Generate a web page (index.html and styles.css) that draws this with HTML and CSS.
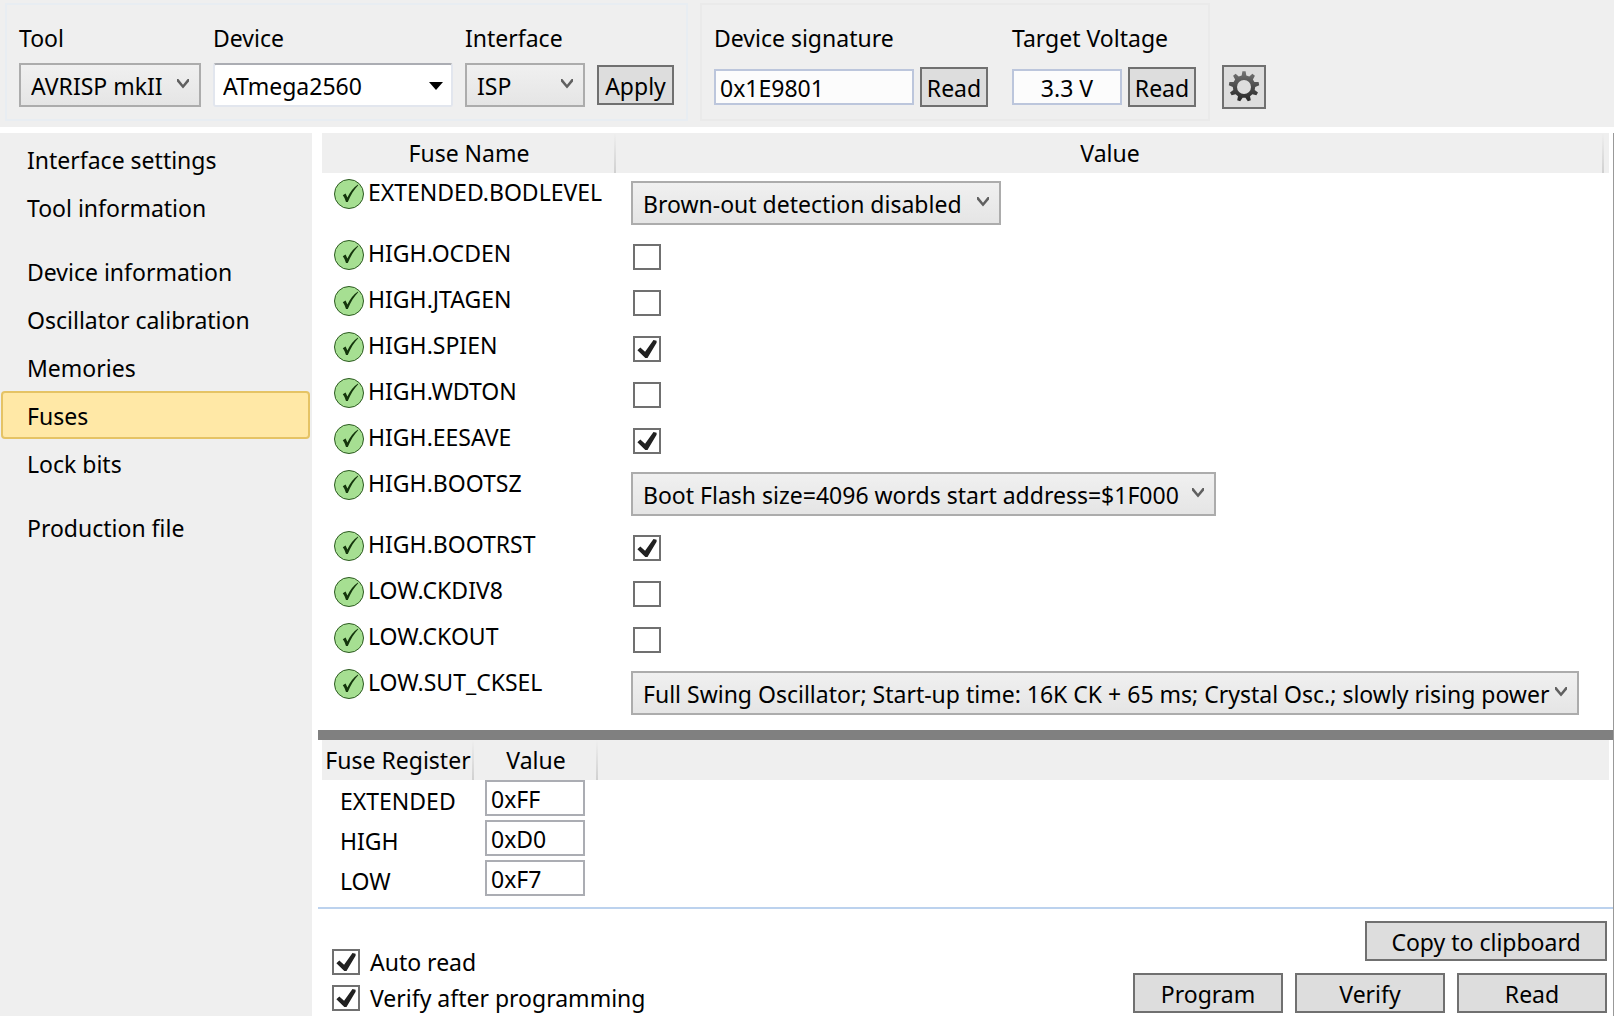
FILE: index.html
```html
<!DOCTYPE html>
<html lang="en">
<head>
<meta charset="utf-8">
<title>Device Programming</title>
<link rel="stylesheet" href="styles.css">
</head>
<body>
<svg class="sprite" aria-hidden="true">
  <symbol id="ok" viewBox="0 0 30 30">
    <circle cx="15" cy="15" r="14.5" fill="#a6df92" stroke="#2c5a20"/>
    <path d="M8.8 16.2 L11.6 14.6 L13.4 18.6 C16.2 12.6 19.4 8.8 24 5.6 L24.2 6.2 C20 10.6 16.8 15.8 13.8 23 L12 23 C11.2 20.4 10.2 18 8.8 16.2 Z" fill="#14350c"/>
  </symbol>
  <symbol id="chev" viewBox="0 0 14 12">
    <path d="M1 1 L2.4 1 L7 6.8 L11.6 1 L13 1 L13 3.4 L7 10.6 L1 3.4 Z" fill="#606060"/>
  </symbol>
</svg>

<header class="toolbar">
  <section class="group group-blue">
    <div class="field">
      <label for="tool">Tool</label>
      <div class="combo w-tool"><select id="tool"><option>AVRISP mkII</option></select><svg class="chev"><use href="#chev"/></svg></div>
    </div>
    <div class="field">
      <label for="device">Device</label>
      <div class="combo combo-white w-device"><select id="device"><option>ATmega2560</option></select><svg class="tri" viewBox="0 0 14 8"><path d="M0 0H14L7 8Z"/></svg></div>
    </div>
    <div class="field">
      <label for="iface">Interface</label>
      <div class="combo w-iface"><select id="iface"><option>ISP</option></select><svg class="chev"><use href="#chev"/></svg></div>
    </div>
    <button class="btn btn-apply" type="button">Apply</button>
  </section>
  <section class="group group-read">
    <div class="field">
      <label for="sig">Device signature</label>
      <div class="pair"><input class="box box-blue w-sig" id="sig" type="text" value="0x1E9801"><button class="btn w-read" type="button">Read</button></div>
    </div>
    <div class="field">
      <label for="volt">Target Voltage</label>
      <div class="pair"><input class="box box-blue w-volt" id="volt" type="text" value="3.3 V"><button class="btn w-read" type="button">Read</button></div>
    </div>
  </section>
  <button class="btn btn-gear" type="button" aria-label="Settings">
    <svg viewBox="0 0 32 32">
      <defs><linearGradient id="gear" x1="0" y1="0" x2="0" y2="1"><stop offset="0" stop-color="#747474"/><stop offset="1" stop-color="#262626"/></linearGradient></defs>
      <mask id="hole"><rect width="32" height="32" fill="#fff"/><circle cx="16" cy="16" r="7" fill="#000"/></mask>
      <g mask="url(#hole)">
        <path fill="url(#gear)" d="M14.4 0.3H17.6L18.3 4.4L21.3 5.5L24.4 2.7L26.9 4.8L24.9 8.5L26.4 11L30.6 11.1L31.2 14.3L27.2 15.9L26.7 19L30 21.5L28.4 24.3L24.4 23.2L22 25.2L22.8 29.2L19.8 30.3L17.4 26.8H14.6L12.2 30.3L9.2 29.2L10 25.2L7.6 23.2L3.6 24.3L2 21.5L5.3 19L4.8 15.9L0.8 14.3L1.4 11.1L5.6 11L7.1 8.5L5.1 4.8L7.6 2.7L10.7 5.5L13.7 4.4Z"/>
      </g>
    </svg>
  </button>
</header>

<div class="body">
  <nav class="side">
    <a href="#interface">Interface settings</a>
    <a href="#toolinfo">Tool information</a>
    <a class="gap" href="#deviceinfo">Device information</a>
    <a href="#osc">Oscillator calibration</a>
    <a href="#memories">Memories</a>
    <a class="active" href="#fuses" aria-current="page">Fuses</a>
    <a href="#lock">Lock bits</a>
    <a class="gap" href="#production">Production file</a>
  </nav>

  <main class="main">
    <table class="fuses">
      <colgroup><col class="c-name"><col><col class="c-end"></colgroup>
      <thead><tr><th>Fuse Name</th><th>Value</th><th></th></tr></thead>
      <tbody>
        <tr class="tall"><td><div class="name"><svg><use href="#ok"/></svg><label for="f1">EXTENDED.BODLEVEL</label></div></td><td colspan="2"><div class="combo w-bod"><select id="f1"><option>Brown-out detection disabled</option></select><svg class="chev"><use href="#chev"/></svg></div></td></tr>
        <tr><td><div class="name"><svg><use href="#ok"/></svg><label for="f2">HIGH.OCDEN</label></div></td><td colspan="2"><input id="f2" type="checkbox"></td></tr>
        <tr><td><div class="name"><svg><use href="#ok"/></svg><label for="f3">HIGH.JTAGEN</label></div></td><td colspan="2"><input id="f3" type="checkbox"></td></tr>
        <tr><td><div class="name"><svg><use href="#ok"/></svg><label for="f4">HIGH.SPIEN</label></div></td><td colspan="2"><input id="f4" type="checkbox" checked></td></tr>
        <tr><td><div class="name"><svg><use href="#ok"/></svg><label for="f5">HIGH.WDTON</label></div></td><td colspan="2"><input id="f5" type="checkbox"></td></tr>
        <tr><td><div class="name"><svg><use href="#ok"/></svg><label for="f6">HIGH.EESAVE</label></div></td><td colspan="2"><input id="f6" type="checkbox" checked></td></tr>
        <tr class="tall"><td><div class="name"><svg><use href="#ok"/></svg><label for="f7">HIGH.BOOTSZ</label></div></td><td colspan="2"><div class="combo w-boot"><select id="f7"><option>Boot Flash size=4096 words start address=$1F000</option></select><svg class="chev"><use href="#chev"/></svg></div></td></tr>
        <tr><td><div class="name"><svg><use href="#ok"/></svg><label for="f8">HIGH.BOOTRST</label></div></td><td colspan="2"><input id="f8" type="checkbox" checked></td></tr>
        <tr><td><div class="name"><svg><use href="#ok"/></svg><label for="f9">LOW.CKDIV8</label></div></td><td colspan="2"><input id="f9" type="checkbox"></td></tr>
        <tr><td><div class="name"><svg><use href="#ok"/></svg><label for="f10">LOW.CKOUT</label></div></td><td colspan="2"><input id="f10" type="checkbox"></td></tr>
        <tr class="tall"><td><div class="name"><svg><use href="#ok"/></svg><label for="f11">LOW.SUT_CKSEL</label></div></td><td colspan="2"><div class="combo w-sut"><select id="f11"><option>Full Swing Oscillator; Start-up time: 16K CK + 65 ms; Crystal Osc.; slowly rising power</option></select><svg class="chev"><use href="#chev"/></svg></div></td></tr>
      </tbody>
    </table>

    <div class="splitter"></div>

    <table class="regs">
      <colgroup><col class="c-reg"><col class="c-val"><col></colgroup>
      <thead><tr><th>Fuse Register</th><th>Value</th><th></th></tr></thead>
      <tbody>
        <tr><td><label for="r1">EXTENDED</label></td><td colspan="2"><input class="box" id="r1" type="text" value="0xFF"></td></tr>
        <tr><td><label for="r2">HIGH</label></td><td colspan="2"><input class="box" id="r2" type="text" value="0xD0"></td></tr>
        <tr><td><label for="r3">LOW</label></td><td colspan="2"><input class="box" id="r3" type="text" value="0xF7"></td></tr>
      </tbody>
    </table>

    <footer class="foot">
      <div class="options">
        <label><input type="checkbox" checked>Auto read</label>
        <label><input type="checkbox" checked>Verify after programming</label>
      </div>
      <div class="actions">
        <button class="btn btn-copy" type="button">Copy to clipboard</button>
        <div class="row">
          <button class="btn" type="button">Program</button>
          <button class="btn" type="button">Verify</button>
          <button class="btn" type="button">Read</button>
        </div>
      </div>
    </footer>
  </main>
</div>
</body>
</html>
```
FILE: styles.css
```css
* { box-sizing: border-box; }

body {
  margin: 0;
  min-height: 100vh;
  display: flex;
  flex-direction: column;
  background: #fff;
  color: #000;
  font: 23px/32px "Segoe UI", "Noto Sans", sans-serif;
}

button, input, select { font: inherit; color: inherit; margin: 0; }

.sprite { position: absolute; width: 0; height: 0; }

/* Toolbar */
.toolbar {
  display: flex;
  align-items: flex-start;
  padding: 3px 5px 6px;
  background: #efefef;
}

.group {
  display: flex;
  align-items: flex-end;
  height: 118px;
  padding: 0 12px 12px;
  border: 2px solid #eaeaea;
}
.group-blue { gap: 12px; border-color: #e8edf2; margin-right: 12px; }
.group-read { gap: 24px; }

.field { display: flex; flex-direction: column; justify-content: space-between; height: 85px; }

.pair { display: flex; align-items: center; gap: 6px; }

/* Combo boxes */
.combo { position: relative; height: 44px; max-width: 100%; }
.combo select {
  appearance: none;
  display: block;
  width: 100%;
  height: 44px;
  padding: 2px 10px 0;
  border: 2px solid #acacac;
  border-radius: 0;
  background: linear-gradient(#f0f0f0, #e5e5e5);
}
.combo-white select {
  padding: 2px 8px 0;
  background: #fff;
  border-color: #abadb3 #e2e6ee #e2e6ee;
  border-radius: 3px;
}
.chev { position: absolute; right: 11px; top: 15px; width: 14px; height: 12px; pointer-events: none; }
.tri { position: absolute; right: 10px; top: 19px; width: 14px; height: 8px; pointer-events: none; }

.w-tool { width: 182px; }
.w-device { width: 240px; }
.w-iface { width: 120px; }
.w-bod { width: 370px; }
.w-boot { width: 585px; }
.w-sut { width: 948px; }

/* Text boxes */
.box {
  display: block;
  width: 100px;
  height: 36px;
  padding: 2px 4px 0;
  border: 2px solid #abadb3;
  background: #fff;
}
.box-blue { border-color: #bcc6dc; background: #fcfcfc; }
.w-sig { width: 200px; }
.w-volt { width: 110px; text-align: center; }

/* Buttons */
.btn {
  width: 150px;
  height: 40px;
  padding: 2px 0 0;
  border: 2px solid #707070;
  background: #ddd;
  white-space: nowrap;
}
.btn-apply { width: 77px; margin-bottom: 2px; }
.w-read { width: 68px; }
.btn-gear { display: grid; place-items: center; width: 44px; height: 44px; padding: 0; margin: 62px 0 0 12px; }
.btn-gear svg { width: 32px; height: 32px; }
.btn-copy { width: 242px; }

/* Check boxes */
input[type="checkbox"] {
  appearance: none;
  display: block;
  flex: none;
  width: 28px;
  height: 26px;
  border: 2px solid #707070;
  background: #fff;
}
input[type="checkbox"]:checked::before {
  content: "";
  display: block;
  width: 24px;
  height: 22px;
  background: #212121;
  clip-path: polygon(10% 56%, 22% 43%, 42% 62%, 77% 9%, 90% 12%, 90% 22%, 52% 91%, 43% 91%);
}

/* Page body */
.body { display: flex; flex: 1; margin-top: 6px; }

.side { flex: none; width: 312px; padding: 2px 2px 0 1px; background: #efefef; }
.side a {
  display: block;
  height: 48px;
  padding: 7px 24px 0;
  border: 2px solid transparent;
  border-radius: 4px;
  color: inherit;
  text-decoration: none;
}
.side .gap { margin-top: 16px; }
.side .active { background: #ffe8a6; border-color: #e5c365; }

.main { flex: 1; min-width: 0; margin-left: 6px; border-right: 1px solid #999; }

/* Tables */
table { width: calc(100% - 8px); margin-left: 4px; border-collapse: collapse; table-layout: fixed; }
th, td { padding: 0; font-weight: 400; text-align: left; vertical-align: top; }
th { height: 40px; padding-top: 4px; text-align: center; background: linear-gradient(#efefef, #d0d0d0) right / 2px 100% no-repeat #efefef; }
th:last-child { background: #efefef; }

.c-name { width: 294px; }
.c-end { width: 5px; }
.c-reg { width: 152px; }
.c-val { width: 124px; }

.fuses tbody tr { height: 46px; }
.fuses tbody .tall { height: 61px; }
.fuses td { padding: 8px 0 0 15px; }
.fuses td:first-child { padding: 5px 0 0 12px; }
.fuses td > input { margin: 2px 0 0 2px; }
.name { display: flex; gap: 4px; }
.name svg { flex: none; width: 30px; height: 30px; margin-top: 1px; }
.name label { height: 32px; margin-top: -2px; }

.splitter { height: 10px; margin-top: 6px; background: #808080; }

.regs tbody tr { height: 40px; }
.regs td:first-child { padding: 5px 0 0 18px; }
.regs td + td { padding-left: 11px; }

/* Footer */
.foot {
  display: flex;
  justify-content: space-between;
  align-items: flex-end;
  margin-top: 7px;
  padding: 12px 6px 3px 14px;
  border-top: 2px solid #bcd2ee;
}
.options { display: flex; flex-direction: column; gap: 4px; margin-bottom: -1px; }
.options label { display: flex; align-items: center; gap: 10px; }
.actions { display: flex; flex-direction: column; align-items: flex-end; gap: 12px; }
.row { display: flex; gap: 12px; }
```
